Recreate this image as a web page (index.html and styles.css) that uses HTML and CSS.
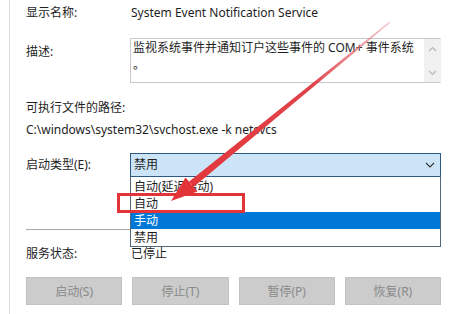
FILE: index.html
```html
<!DOCTYPE html>
<html lang="zh-CN">
<head>
    <meta charset="UTF-8">
    <title>服务属性</title>
    <link rel="stylesheet" href="styles.css">
</head>
<body>
    <div class="panel">
        <div class="row name-row">
            <span class="label">显示名称:</span>
            <span class="value">System Event Notification Service</span>
        </div>

        <div class="row desc-row">
            <span class="label desc-label">描述:</span>
            <div class="desc-box">
                <div class="desc-text">监视系统事件并通知订户这些事件的 COM+ 事件系统<br>。</div>
                <div class="scrollbar">
                    <svg width="9" height="6" viewBox="0 0 9 6"><path d="M1 5 L4.5 1.5 L8 5" fill="none" stroke="#b8b8b8" stroke-width="1.2"/></svg>
                    <svg width="9" height="6" viewBox="0 0 9 6"><path d="M1 1 L4.5 4.5 L8 1" fill="none" stroke="#b8b8b8" stroke-width="1.2"/></svg>
                </div>
            </div>
        </div>

        <div class="path-block">
            <div class="label">可执行文件的路径:</div>
            <div class="path">C:\windows\system32\svchost.exe -k netsvcs</div>
        </div>

        <div class="row startup-row">
            <span class="label">启动类型(E):</span>
            <div class="combo">
                <div class="combo-box">
                    <span>禁用</span>
                    <svg width="10" height="6" viewBox="0 0 10 6"><path d="M1 1 L5 5 L9 1" fill="none" stroke="#333" stroke-width="1.1"/></svg>
                </div>
                <ul class="combo-list">
                    <li>自动(延迟启动)</li>
                    <li>自动</li>
                    <li class="selected">手动</li>
                    <li>禁用</li>
                </ul>
            </div>
        </div>

        <hr class="sep">

        <div class="row status-row">
            <span class="label">服务状态:</span>
            <span class="value">已停止</span>
        </div>

        <div class="buttons">
            <button class="btn" disabled>启动(S)</button>
            <button class="btn" disabled>停止(T)</button>
            <button class="btn" disabled>暂停(P)</button>
            <button class="btn" disabled>恢复(R)</button>
        </div>
    </div>

    <!-- red annotation drawn over the dialog -->
    <svg class="annotation" width="460" height="314" viewBox="0 0 460 314">
        <defs>
            <linearGradient id="arrowFade" x1="390" y1="22" x2="172" y2="200" gradientUnits="userSpaceOnUse">
                <stop offset="0" stop-color="#e88a90" stop-opacity="0.5"/>
                <stop offset="0.35" stop-color="#e0444b"/>
                <stop offset="1" stop-color="#e3343a"/>
            </linearGradient>
        </defs>
        <rect x="118.5" y="194.5" width="125" height="17" fill="none" stroke="#e3343a" stroke-width="3"/>
        <polygon points="390.4,22.4 389.6,21.6 189.2,181.5 193.6,186.9" fill="url(#arrowFade)"/>
        <polygon points="171,201 185.5,177.5 197.5,191.5" fill="#e3343a"/>
    </svg>
</body>
</html>
```

FILE: styles.css
```css
body {
    margin: 0;
    background: #fff;
    font-family: "Noto Sans", "Noto Sans CJK SC", sans-serif;
    font-size: 12px;
    color: #1e1e1e;
    width: 460px;
    height: 314px;
    overflow: hidden;
    position: relative;
}
.panel {
    margin-left: 9px;
    border-left: 1px solid #dedede;
    padding: 4px 0 0 16px;
    width: 415px;
    height: 310px;
}
.row {
    display: flex;
    line-height: 18px;
}
.label {
    width: 104px;
    flex-shrink: 0;
}
.name-row .value {
    padding-left: 1px;
}
.desc-row {
    margin-top: 16px;
}
.desc-label {
    padding-top: 5px;
}
.desc-box {
    flex: 1;
    height: 43px;
    border: 1px solid #c8c8c8;
    border-right-color: #f0f0f0;
    display: flex;
}
.desc-text {
    flex: 1;
    padding-left: 2px;
    line-height: 17px;
}
.scrollbar {
    width: 16px;
    background: #f0f0f0;
    display: flex;
    flex-direction: column;
    align-items: center;
    justify-content: space-between;
    padding: 7px 0 6px;
}
.path-block {
    margin-top: 16px;
    line-height: 18px;
}
.path {
    margin-top: 4px;
}
.startup-row {
    margin-top: 14px;
    align-items: center;
}
.combo {
    flex: 1;
    position: relative;
}
.combo-box {
    height: 22px;
    border: 1px solid #2c5a82;
    background: #cce4f7;
    display: flex;
    align-items: center;
    justify-content: space-between;
    padding: 0 5px 0 3px;
}
.combo-list {
    position: absolute;
    top: 24px;
    left: 0;
    right: 0;
    margin: 0;
    padding: 1px 0 0;
    list-style: none;
    background: #fff;
    border: 1px solid #56677a;
    border-top: none;
    z-index: 2;
}
.combo-list li {
    height: 17px;
    line-height: 17px;
    padding-left: 3px;
}
.combo-list .selected {
    background: #0078d7;
    color: #fff;
}
.sep {
    margin: 52px 0 0;
    border: none;
    border-top: 1px solid #a9a9a9;
}
.status-row {
    margin-top: 17px;
    line-height: 14px;
}
.status-row .value {
    padding-left: 1px;
}
.buttons {
    margin-top: 16px;
    display: flex;
    gap: 10px;
}
.btn {
    flex: 1;
    height: 28px;
    background: #cccccc;
    border: 1px solid #c2c2c2;
    color: #8a8a8a;
    font: inherit;
    font-size: 12px;
    padding: 0;
}
.annotation {
    position: absolute;
    left: 0;
    top: 0;
    z-index: 5;
}
```
